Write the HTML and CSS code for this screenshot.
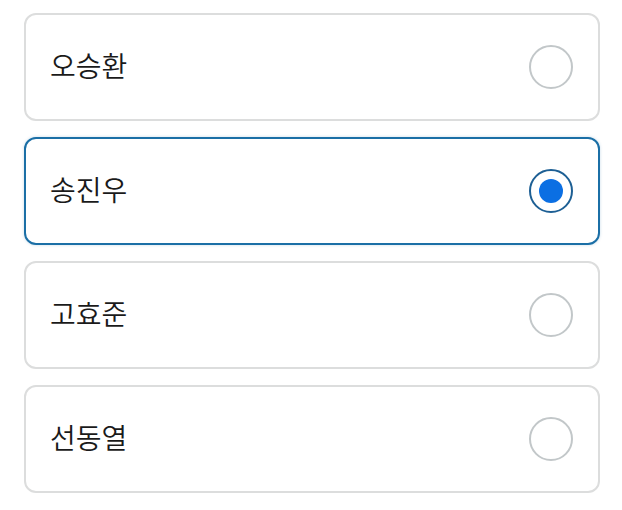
FILE: index.html
```html
<!DOCTYPE html>
<html lang="ko">
<head>
  <meta charset="UTF-8" />
  <meta name="viewport" content="width=device-width, initial-scale=1.0"/>
  <title>선택</title>
  <link rel="stylesheet" href="styles.css">
</head>
<body>
  <div class="choice-list">
    <label class="choice">
      <span class="name">오승환</span>
      <span class="radio"></span>
    </label>
    <label class="choice selected">
      <span class="name">송진우</span>
      <span class="radio"></span>
    </label>
    <label class="choice">
      <span class="name">고효준</span>
      <span class="radio"></span>
    </label>
    <label class="choice">
      <span class="name">선동열</span>
      <span class="radio"></span>
    </label>
  </div>
</body>
</html>
```

FILE: styles.css
```css
body {
  margin: 0;
  background-color: #fff;
  color: #1a1a1a;
  font-family: "Noto Sans CJK KR", "Noto Sans", sans-serif;
}
.choice-list {
  display: flex;
  flex-direction: column;
  gap: 16px;
  padding: 13px 22px 0 24px;
}
.choice {
  display: flex;
  align-items: center;
  justify-content: space-between;
  box-sizing: border-box;
  height: 108px;
  padding: 0 25px 0 24px;
  border: 2px solid #dcdddd;
  border-radius: 12px;
  background-color: #fff;
}
.choice.selected {
  border-color: #1b6fa6;
  box-shadow: 0 0 3px rgba(27, 111, 166, 0.25);
}
.name {
  font-size: 28px;
  font-weight: 350;
  line-height: 1;
  margin-top: -4px;
}
.radio {
  box-sizing: border-box;
  width: 44px;
  height: 44px;
  border: 2px solid #c2c7c9;
  border-radius: 50%;
  display: flex;
  align-items: center;
  justify-content: center;
}
.selected .radio {
  border-color: #1d5f94;
}
.selected .radio::after {
  content: "";
  width: 24px;
  height: 24px;
  border-radius: 50%;
  background-color: #0b6fe3;
}
```
